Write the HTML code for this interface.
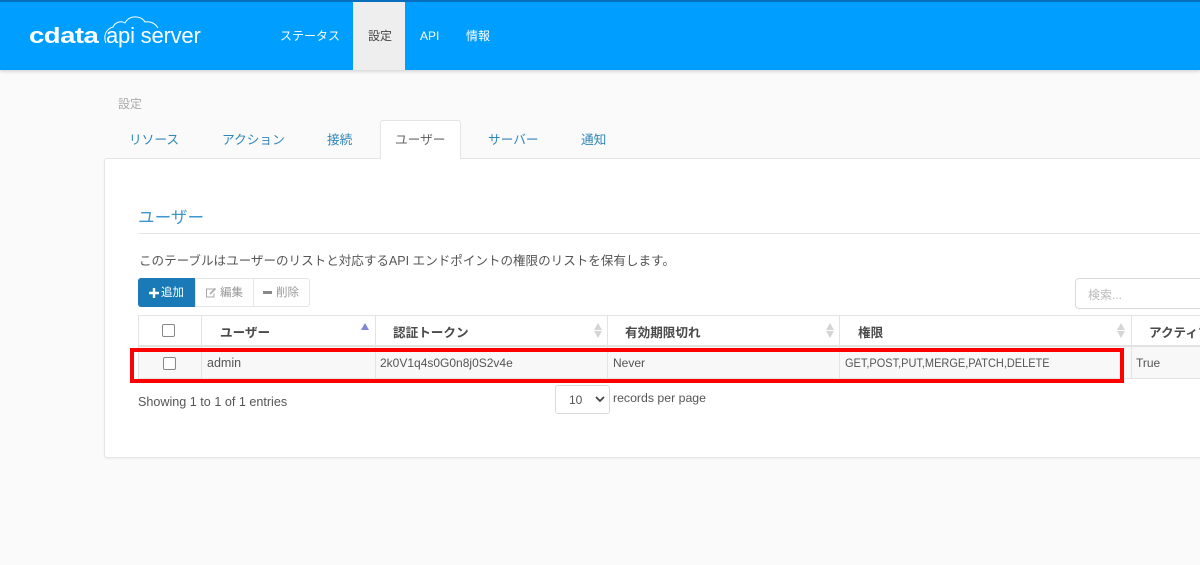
<!DOCTYPE html>
<html lang="ja"><head><meta charset="utf-8"><title>設定</title>
<style>
html,body{margin:0;padding:0}
body{width:1200px;height:565px;overflow:hidden;position:relative;background:#fafafa;font-family:"Liberation Sans","Noto Sans CJK JP",sans-serif;color:#555;font-size:12px}
.a{position:absolute;white-space:nowrap;line-height:16px}
.b{position:absolute;box-sizing:border-box}
.nav{color:#fff;font-size:12px;font-weight:400;top:28px}
.tab{color:#2f86b8;font-size:12.7px;top:132px}
.th{font-weight:700;color:#4a4a4a;font-size:12.6px;top:325px}
.td{font-size:12px;color:#555;top:355px}
.v{position:absolute;width:1px;background:#e3e3e3}
.cb{position:absolute;width:11px;height:11px;border:1px solid #888;border-radius:2px;background:#fff}
.s{position:absolute;width:0;height:0;border-left:4px solid transparent;border-right:4px solid transparent}
</style></head><body>
<div class="b" style="left:0;top:0;width:1200px;height:70px;background:#009fff;border-top:2px solid #0a6cbc;box-shadow:0 1px 4px rgba(0,0,0,.2)"></div>
<div class="b" style="left:353px;top:2px;width:52px;height:68px;background:#eee"></div>

<div class="a" style="left:29px;top:22px;color:#fff;font-size:22px;line-height:28px;font-weight:700;letter-spacing:-.4px;transform-origin:0 50%;transform:scaleX(1.25)">cdata</div>
<svg class="b" style="left:100px;top:12px" width="70" height="36" viewBox="0 0 70 36" fill="none" stroke="#fff" stroke-width="1"><path d="M6 31C3 24 6 17 13 15C16 9 22 9 25 11C29 3 41 3 45 10C50 9 55 11 58 16"/></svg>
<div class="a" style="left:106px;top:21px;color:#fff;font-size:22px;line-height:30px;letter-spacing:-.2px">api server</div>

<div class="a nav" style="left:280px">ステータス</div>
<div class="a nav" style="left:368px;color:#444">設定</div>
<div class="a nav" style="left:420px">API</div>
<div class="a nav" style="left:466px">情報</div>

<div class="a" style="left:118px;top:96px;color:#aaa;font-size:12px">設定</div>

<div class="b" style="left:104px;top:158px;width:1110px;height:300px;background:#fff;border:1px solid #e4e4e4;border-radius:3px;box-shadow:0 1px 2px rgba(0,0,0,.05)"></div>
<div class="b" style="left:380px;top:120px;width:81px;height:39px;background:#fff;border:1px solid #e4e4e4;border-bottom:0;border-radius:3px 3px 0 0"></div>
<div class="a tab" style="left:129px">リソース</div>
<div class="a tab" style="left:222px">アクション</div>
<div class="a tab" style="left:327px">接続</div>
<div class="a tab" style="left:395px;color:#666">ユーザー</div>
<div class="a tab" style="left:488px">サーバー</div>
<div class="a tab" style="left:581px">通知</div>

<div class="a" style="left:138px;top:207px;font-size:16.6px;line-height:22px;color:#3d97cf">ユーザー</div>
<div class="b" style="left:138px;top:233px;width:1062px;height:1px;background:#e6e6e6"></div>
<div class="a" style="left:139px;top:253px;font-size:12.55px;color:#555">このテーブルはユーザーのリストと対応するAPI エンドポイントの権限のリストを保有します。</div>

<div class="b" style="left:138px;top:278px;width:58px;height:29px;background:#1a7ab8;border-radius:3px 0 0 3px"></div>
<div class="b" style="left:195px;top:278px;width:59px;height:29px;border:1px solid #e6e6e6;background:#fff"></div>
<div class="b" style="left:253px;top:278px;width:57px;height:29px;border:1px solid #e6e6e6;background:#fff;border-radius:0 3px 3px 0"></div>
<svg class="b" style="left:149px;top:288px" width="10" height="10"><path d="M5 0v10M0 5h10" stroke="#fff" stroke-width="2.4"/></svg>
<div class="a" style="left:161px;top:285px;color:#fff;font-size:11.5px">追加</div>
<svg class="b" style="left:205px;top:287px" width="12" height="11" fill="none" stroke="#aaa" stroke-width="1"><path d="M9 2H1.500V10H9V6.500"/><path d="M5 7L10.500 1.500" stroke-width="1.600"/></svg>
<div class="a" style="left:220px;top:285px;color:#999;font-size:11.5px">編集</div>
<div class="b" style="left:263px;top:291px;width:9px;height:3px;background:#888"></div>
<div class="a" style="left:276px;top:285px;color:#999;font-size:11.5px">削除</div>

<div class="b" style="left:1075px;top:278px;width:140px;height:31px;border:1px solid #d9d9d9;border-radius:4px;background:#fff"></div>
<div class="a" style="left:1088px;top:287px;color:#bbb;font-size:12px">検索...</div>

<div class="b" style="left:138px;top:315px;width:1062px;height:64px;background:#fff;border:1px solid #e3e3e3;border-right:0"></div>
<div class="b" style="left:139px;top:347px;width:1061px;height:31px;background:#f8f8f8"></div>
<div class="b" style="left:138px;top:345px;width:1062px;height:2px;background:#e2e2e2"></div>
<div class="v" style="left:201px;top:315px;height:64px"></div>
<div class="v" style="left:375px;top:315px;height:64px"></div>
<div class="v" style="left:607px;top:315px;height:64px"></div>
<div class="v" style="left:839px;top:315px;height:64px"></div>
<div class="v" style="left:1131px;top:315px;height:64px"></div>

<div class="cb" style="left:162px;top:324px"></div>
<div class="a th" style="left:220px">ユーザー</div>
<div class="s" style="left:361px;top:323px;border-bottom:7px solid #7f86d6"></div>
<div class="a th" style="left:393px">認証トークン</div>
<div class="s" style="left:594px;top:323px;border-bottom:7px solid #d5d5d5"></div><div class="s" style="left:594px;top:331px;border-top:7px solid #d5d5d5"></div>
<div class="a th" style="left:625px">有効期限切れ</div>
<div class="s" style="left:826px;top:323px;border-bottom:7px solid #d5d5d5"></div><div class="s" style="left:826px;top:331px;border-top:7px solid #d5d5d5"></div>
<div class="a th" style="left:858px">権限</div>
<div class="s" style="left:1117px;top:323px;border-bottom:7px solid #d5d5d5"></div><div class="s" style="left:1117px;top:331px;border-top:7px solid #d5d5d5"></div>
<div class="a th" style="left:1149px">アクティブ</div>

<div class="cb" style="left:163px;top:357px"></div>
<div class="a td" style="left:207px;font-size:12.5px">admin</div>
<div class="a td" style="left:380px">2k0V1q4s0G0n8j0S2v4e</div>
<div class="a td" style="left:613px">Never</div>
<div class="a td" style="left:845px;transform-origin:0 50%;transform:scaleX(.915)">GET,POST,PUT,MERGE,PATCH,DELETE</div>
<div class="a td" style="left:1136px">True</div>

<div class="b" style="left:130px;top:348px;width:994px;height:35px;border:4px solid #f00"></div>

<div class="a" style="left:138px;top:394px;font-size:12.6px">Showing 1 to 1 of 1 entries</div>
<div class="b" style="left:555px;top:385px;width:55px;height:29px;border:1px solid #d9d9d9;border-radius:3px;background:#fff"></div>
<div class="a" style="left:569px;top:392px;font-size:12px">10</div>
<svg class="b" style="left:595px;top:396px" width="10" height="7"><path d="M1 1L5 5L9 1" fill="none" stroke="#444" stroke-width="1.800"/></svg>
<div class="a" style="left:613px;top:390px;font-size:12.3px">records per page</div>
</body></html>
